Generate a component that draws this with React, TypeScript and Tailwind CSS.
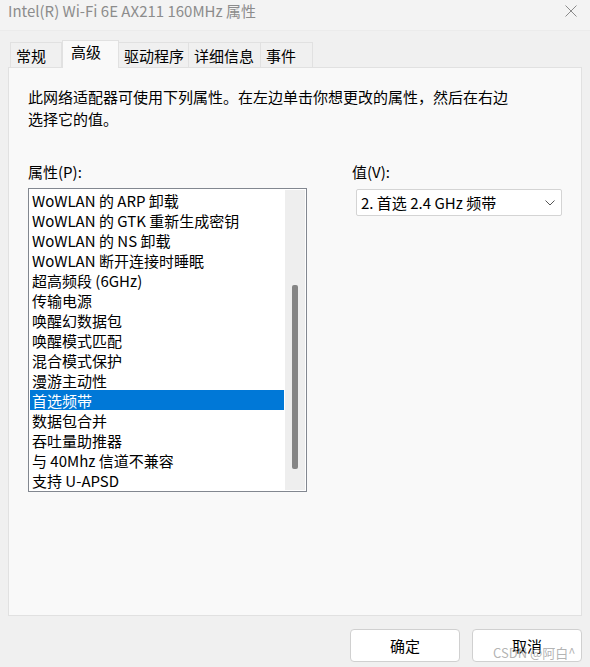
const font = { fontFamily: '"Noto Sans CJK SC", "Noto Sans", sans-serif' };

const items = [
  "WoWLAN 的 ARP 卸载",
  "WoWLAN 的 GTK 重新生成密钥",
  "WoWLAN 的 NS 卸载",
  "WoWLAN 断开连接时睡眠",
  "超高频段 (6GHz)",
  "传输电源",
  "唤醒幻数据包",
  "唤醒模式匹配",
  "混合模式保护",
  "漫游主动性",
  "首选频带",
  "数据包合并",
  "吞吐量助推器",
  "与 40Mhz 信道不兼容",
  "支持 U-APSD",
];

const tabs = [
  { label: "常规", w: "w-[52px]" },
  { label: "高级", w: "w-[57px]" },
  { label: "驱动程序", w: "w-[70px]" },
  { label: "详细信息", w: "w-[72px]" },
  { label: "事件", w: "w-[52px]" },
];

function Tab({ label, w, active }: { label: string; w: string; active?: boolean }) {
  if (active) {
    return (
      <div
        className={`relative z-10 -mb-px flex h-[28px] items-start border border-b-0 border-[#e1e1e1] bg-[#f9f9f9] pl-[8px] pt-[1px] text-[15px] text-black ${w}`}
      >
        {label}
      </div>
    );
  }
  return (
    <div
      className={`flex h-[25px] items-center border border-b-0 border-l-0 border-[#e1e1e1] bg-[#f0f0f0] pl-[5px] pt-[2px] text-[15px] text-black first:border-l ${w}`}
    >
      {label}
    </div>
  );
}

export default function App() {
  return (
    <div
      className="relative flex h-[667px] w-[590px] flex-col overflow-hidden bg-[#f0f0f0] leading-[20px]"
      style={font}
    >
      {/* title bar */}
      <div className="flex h-[31px] items-center justify-between border-b border-[#ebebeb] bg-[#f3f3f3] pl-[8px] pr-[13px]">
        <span className="-mt-[8px] text-[15px] text-[#8c8c8c]">
          Intel(R) Wi-Fi 6E AX211 160MHz 属性
        </span>
        <svg width="12" height="12" viewBox="0 0 12 12" className="-mt-[9px]">
          <path d="M0.5 0.5 L11.5 11.5 M11.5 0.5 L0.5 11.5" stroke="#8a8a8a" strokeWidth="1" />
        </svg>
      </div>

      {/* tabs */}
      <div className="ml-[10px] mt-[9px] flex items-end">
        {tabs.map((t) => (
          <Tab key={t.label} label={t.label} w={t.w} active={t.label === "高级"} />
        ))}
      </div>

      {/* panel */}
      <div className="mx-[8px] h-[549px] border border-[#e1e1e1] bg-[#f9f9f9] px-[19px] pt-[18px]">
        <p className="text-[15px] leading-[22px] text-black">
          此网络适配器可使用下列属性。在左边单击你想更改的属性，然后在右边
          <br />
          选择它的值。
        </p>

        <div className="mt-[31px] flex">
          <div className="w-[279px]">
            <div className="h-[21px] text-[15px] leading-[21px]">属性(P):</div>
            <div className="mt-[6px] flex h-[304px] border border-[#828790] bg-white">
              <div className="flex-1 p-px">
                {items.map((it) => (
                  <div
                    key={it}
                    className={
                      it === "首选频带"
                        ? "h-[20px] bg-[#0078d7] pl-[2px] text-[15px] leading-[21px] whitespace-nowrap text-white"
                        : "h-[20px] pl-[2px] text-[15px] leading-[21px] whitespace-nowrap text-black"
                    }
                  >
                    {it}
                  </div>
                ))}
              </div>
              <div className="my-px mr-px flex w-[20px] flex-col bg-[#eeeeee] pt-[95px]">
                <div className="ml-[7px] h-[184px] w-[6px] rounded-[2px] bg-[#858585]" />
              </div>
            </div>
          </div>

          <div className="ml-[45px]">
            <div className="h-[21px] text-[15px] leading-[21px]">值(V):</div>
            <div className="ml-[4px] mt-[7px] flex h-[27px] w-[206px] items-center justify-between rounded-[2px] border border-[#d4d4d4] bg-white pl-[4px] pr-[6px]">
              <span className="text-[15px] text-black">2. 首选 2.4 GHz 频带</span>
              <svg width="10" height="6" viewBox="0 0 10 6">
                <path d="M0.5 0.5 L5 5 L9.5 0.5" fill="none" stroke="#555" strokeWidth="1" />
              </svg>
            </div>
          </div>
        </div>
      </div>

      {/* buttons */}
      <div className="mt-[13px] flex justify-end gap-[12px] pr-[8px]">
        <button className="h-[33px] w-[110px] rounded-[4px] border border-[#d0d0d0] bg-white text-[15px] text-black">
          确定
        </button>
        <button className="h-[33px] w-[110px] rounded-[4px] border border-[#d0d0d0] bg-white text-[15px] text-black">
          取消
        </button>
      </div>

      <span className="absolute left-[493px] top-[643px] text-[13px] text-[#a0a0a0]/80">
        CSDN @阿白^
      </span>
    </div>
  );
}
